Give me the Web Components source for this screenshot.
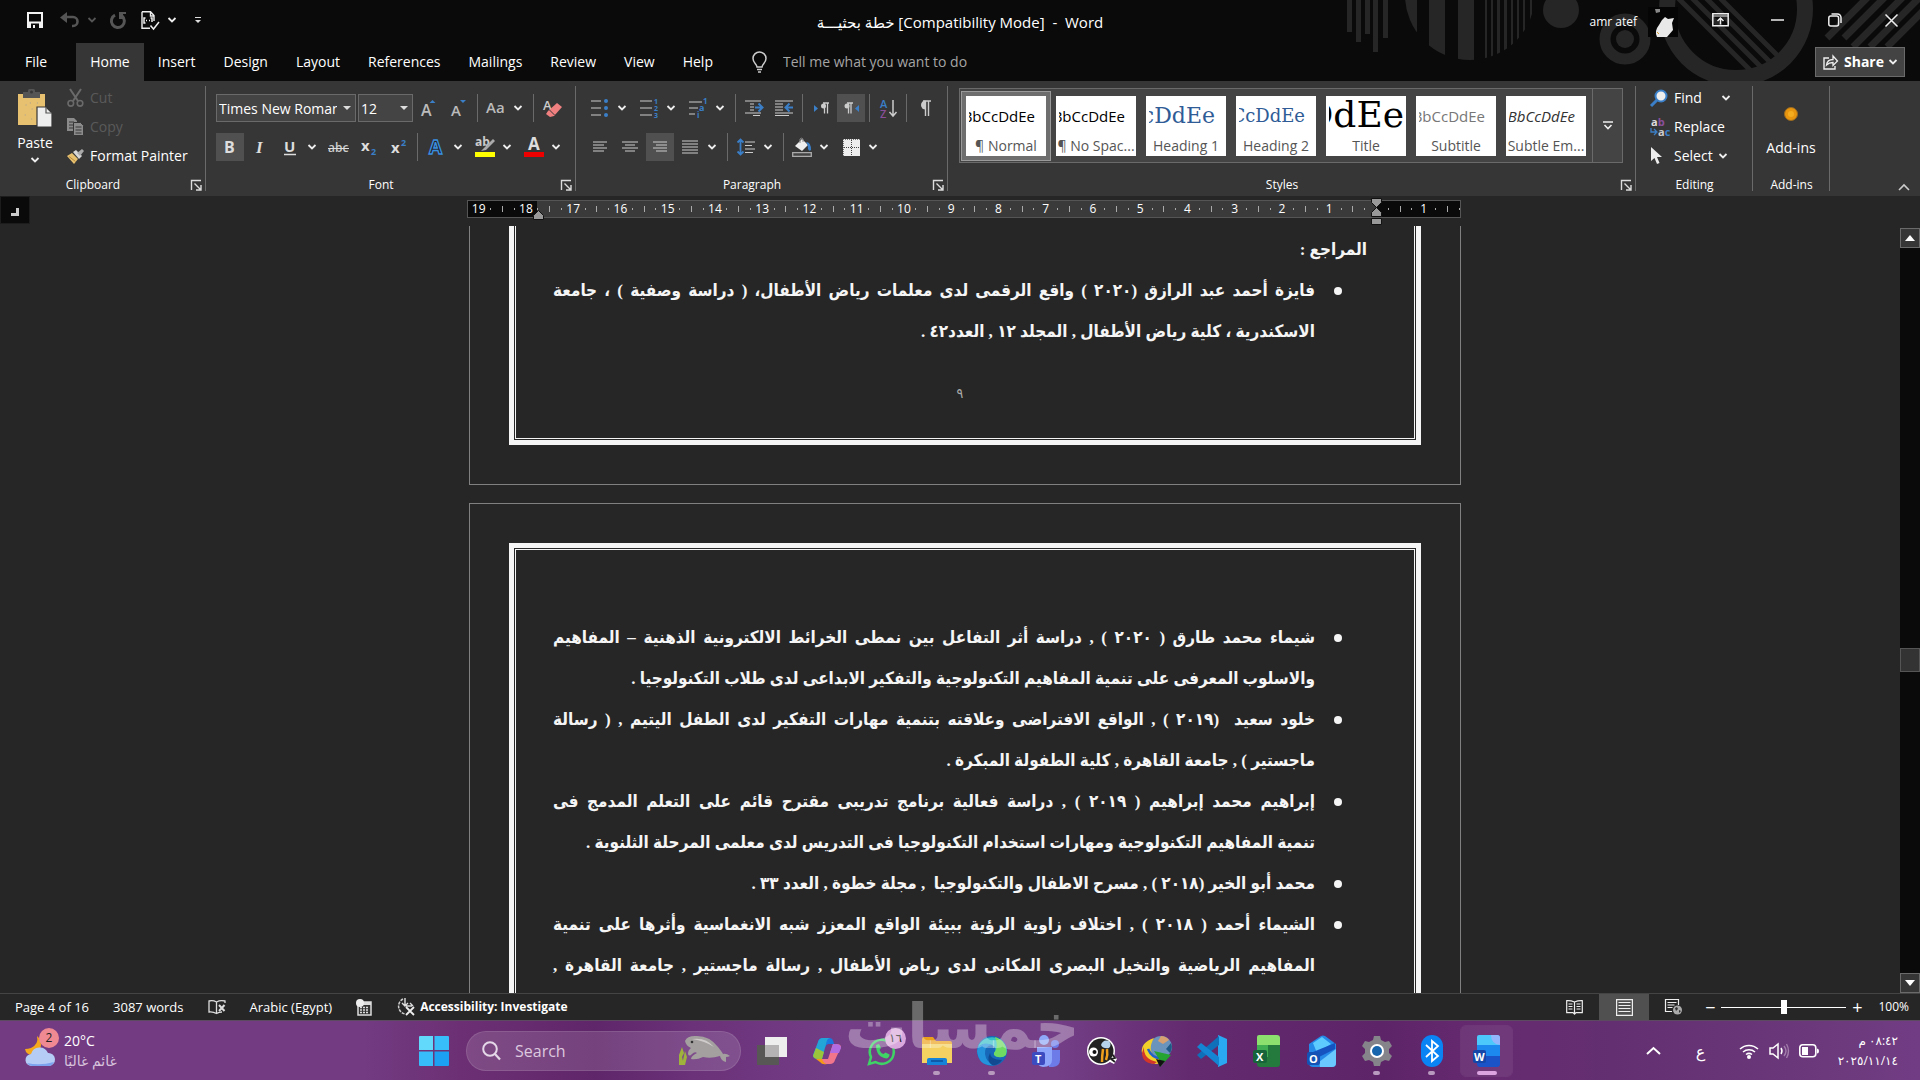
<!doctype html>
<html lang="en">
<head>
<meta charset="UTF-8">
<title>خطة بحثيـــة [Compatibility Mode] - Word</title>
<style>
  :root {
    --black: #0a0a0a;
    --ribbon: #363636;
    --canvas: #262626;
    --line: #6a6a6a;
    --blue: #3a7fc8;
    --ui: "Open Sans", "Noto Sans", "DejaVu Sans", sans-serif;
  }
  html, body { height: 100%; }
  body { margin: 0; background: var(--canvas); color: #fff; font: 14px/20px var(--ui); overflow: hidden; }
</style>
</head>
<body>

<word-app>
  <title-bar slot="top"></title-bar>
  <tab-strip slot="top"></tab-strip>
  <ribbon-bar slot="top"></ribbon-bar>
  <ruler-bar slot="ruler"></ruler-bar>

  <doc-page slot="page" tail>
    <p class="head">المراجع :</p>
    <doc-entry>
      <span class="full">فايزة أحمد عبد الرازق (٢٠٢٠ ) واقع الرقمى لدى معلمات رياض الأطفال، ( دراسة وصفية ) ، جامعة</span>
      <span>الاسكندرية ، كلية رياض الأطفال , المجلد ١٢ , العدد٤٢ .</span>
    </doc-entry>
    <span slot="number">٩</span>
  </doc-page>

  <doc-page slot="page">
    <doc-entry>
      <span class="full">شيماء محمد طارق ( ٢٠٢٠ ) , دراسة أثر التفاعل بين نمطى الخرائط الالكترونية الذهنية – المفاهيم</span>
      <span>والاسلوب المعرفى على تنمية المفاهيم التكنولوجية والتفكير الابداعى لدى طلاب التكنولوجيا .</span>
    </doc-entry>
    <doc-entry>
      <span class="full">خلود سعيد &nbsp;(٢٠١٩ ) , الواقع الافتراضى وعلاقته بتنمية مهارات التفكير لدى الطفل اليتيم , ( رسالة</span>
      <span>ماجستير ) , جامعة القاهرة , كلية الطفولة المبكرة .</span>
    </doc-entry>
    <doc-entry>
      <span class="full">إبراهيم محمد إبراهيم ( ٢٠١٩ ) , دراسة فعالية برنامج تدريبى مقترح قائم على التعلم المدمج فى</span>
      <span>تنمية المفاهيم التكنولوجية ومهارات استخدام التكنولوجيا فى التدريس لدى معلمى المرحلة الثلنوية .</span>
    </doc-entry>
    <doc-entry>
      <span>محمد أبو الخير (٢٠١٨ ) , مسرح الاطفال والتكنولوجيا &nbsp;, مجلة خطوة , العدد ٣٣ .</span>
    </doc-entry>
    <doc-entry>
      <span class="full">الشيماء أحمد ( ٢٠١٨ ) , اختلاف زاوية الرؤية ببيئة الواقع المعزز شبه الانغماسية وأثرها على تنمية</span>
      <span class="full">المفاهيم الرياضية والتخيل البصرى المكانى لدى رياض الأطفال , رسالة ماجستير , جامعة القاهرة ,</span>
    </doc-entry>
  </doc-page>

  <status-bar slot="bottom"></status-bar>
  <task-bar slot="bottom"></task-bar>
</word-app>

<script>
// [width, height, markup]
const ICONS = {
  chev: [8, 6, '<path d="M.5 1L4 4.500 7.500 1" fill="none" stroke="#eee" stroke-width="1.800"/>'],
  chevdim: [8, 6, '<path d="M.5 1L4 4.500 7.500 1" fill="none" stroke="#555" stroke-width="1.800"/>'],
  tri: [8, 4, '<path d="M0 0h8L4 4z" fill="#ddd"/>'],
  more: [10, 10, '<path d="M0 1h10" stroke="#eee" stroke-width="1.500"/><path d="M1.500 4L5 7.500 8.500 4" fill="none" stroke="#eee" stroke-width="1.600"/>'],
  up: [12, 8, '<path d="M1 7l5-5 5 5" fill="none" stroke="#ccc" stroke-width="1.600"/>'],
  launcher: [11, 11, '<path d="M.5 10V.5H10M3.500 3.500l6 6M10 5v5H5" fill="none" stroke="#ddd" stroke-width="1.400"/>'],
  save: [16, 16, '<path d="M0 0h16v16H0z" fill="#f2f2f2"/><path d="M2 2h12v7.500H2zM4 11.500h8V16H4z" fill="#0a0a0a"/><path d="M6 13h2v3H6z" fill="#f2f2f2"/>'],
  undo: [20, 16, '<path d="M3 5h10a4.500 4.500 0 0 1 0 9h-1" fill="none" stroke="#555" stroke-width="2.600"/><path d="M0 5.500L7 0v11z" fill="#555"/>'],
  redo: [18, 17, '<path d="M6 3.200A6.500 6.500 0 1 0 13 4" fill="none" stroke="#555" stroke-width="3"/><path d="M10 0h7v2l-3 0v5h-4z" fill="#555"/>'],
  doccheck: [19, 19, '<path d="M1 .700h8.500L13 4.500V10M9 17.300H1V.700M9.500 1v4H13" fill="none" stroke="#eee" stroke-width="1.400"/><path d="M4.500 7H3v5h1.500M9.500 7H11v4M5 9.500h1m2 0h1M9.500 14.500l3 3.500 5.500-7" fill="none" stroke="#eee" stroke-width="1.500"/>'],
  custom: [6, 6, '<path d="M0 .500h6" stroke="#ddd"/><path d="M0 3h6L3 6z" fill="#ddd"/>'],
  ribbonopt: [17, 14, '<path d="M.800.800h15.400v12H.800z" fill="none" stroke="#eee" stroke-width="1.500"/><path d="M1 3h15" stroke="#eee"/><path d="M8.500 11.500V5.500M5.500 8l3-3 3 3" fill="none" stroke="#eee" stroke-width="1.500"/>'],
  min: [13, 2, '<path d="M0 1h13" stroke="#eee" stroke-width="1.500"/>'],
  restore: [14, 14, '<rect x=".800" y="3" width="9.800" height="10" rx="2" fill="none" stroke="#eee" stroke-width="1.500"/><path d="M3.500 1h6a3.500 3.500 0 0 1 3.500 3.500V10" fill="none" stroke="#eee" stroke-width="1.500"/>'],
  close: [13, 13, '<path d="M.500.500l12 12m0-12l-12 12" stroke="#eee" stroke-width="1.500"/>'],
  share: [16, 16, '<path d="M6 4H1v11h11v-3" fill="none" stroke="#eee" stroke-width="1.400"/><path d="M3.500 11C4 7 7 5.500 10 5.500V2l4.500 5-4.500 4.500V8.500C7 8.500 5 9.500 3.500 11z" fill="none" stroke="#eee" stroke-width="1.300"/>'],
  bulb: [15, 21, '<path d="M5 15c0-3-4-4-4-8.500a6.500 6.500 0 0 1 13 0C14 11 10 12 10 15z" fill="none" stroke="#ccc" stroke-width="1.500"/><path d="M5 17.500h5M6 20h3" stroke="#ccc" stroke-width="1.500"/>'],
  paste: [36, 40, '<path d="M1 5h27v31H1z" fill="#e8c170"/><path d="M6 3h5V1.500Q11 0 12.500 0h4Q18 0 18 1.500V3h5v6H6z" fill="#555"/><circle cx="14.500" cy="3" r="1.500" fill="#363636"/><path d="M9 16h.1m6 4h.1m-7 6h.1m5-12h.1m7 0h.1m-6 16h.1" stroke="#b9a98a" stroke-width="1.300" stroke-linecap="round"/><path d="M20 18h9l6 6v14H20z" fill="#eee" stroke="#363636" stroke-width="1.200"/><path d="M29 18v6h6" fill="none" stroke="#555" stroke-width="1.200"/>'],
  cut: [17, 18, '<path d="M3 0l8 12M14 0L6 12" stroke="#6a6a6a" stroke-width="2"/><circle cx="3.800" cy="14.300" r="2.800" fill="none" stroke="#6a6a6a" stroke-width="1.600"/><circle cx="13" cy="14.300" r="2.800" fill="none" stroke="#6a6a6a" stroke-width="1.600"/>'],
  copy: [17, 18, '<path d="M0 0h7l3 3v10H0z" fill="#8b8b8b"/><path d="M2 4h5M2 7h5M2 10h5" stroke="#363636"/><path d="M6.500 4.500h7l3 3v10h-10z" fill="#8b8b8b" stroke="#363636"/><path d="M8.500 9h6m-6 3h6m-6 3h6" stroke="#363636"/>'],
  painter: [17, 16, '<path d="M0 8l5-3 6 6-4 5z" fill="#e8c170"/><path d="M2 8.500l6.500 5" stroke="#b58a3a"/><path d="M6 4l3-2 6 6-3 3z" fill="#d8d8d8"/><path d="M10 5l5-4 2 2-4 5z" fill="#aaa"/>'],
  grow: [16, 18, '<text x="0" y="17" font-size="16" font-weight="600" fill="#bbb">A</text><path d="M8.500 4h6L11.500 1z" fill="#3a7fc8"/>'],
  shrink: [16, 18, '<text x="0" y="17" font-size="15" font-weight="600" fill="#bbb">A</text><path d="M9 1h6l-3 3z" fill="#3a7fc8"/>'],
  aa: [20, 16, '<text x="0" y="13" font-size="15" font-weight="600" fill="#bbb">Aa</text>'],
  eraser: [19, 20, '<text x="0" y="12" font-size="13" font-weight="600" fill="#ccc">A</text><path d="M5 13L14 5l5 4-8 9-4 1-4-3z" fill="#f08080"/><path d="M6.500 12l5 5" stroke="#363636"/>'],
  bold: [14, 16, '<text x="1" y="14" font-size="16" font-weight="700" fill="#ddd">B</text>'],
  italic: [14, 16, '<text x="3" y="14" font-size="17" font-weight="700" font-style="italic" font-family="Liberation Serif" fill="#ddd">I</text>'],
  under: [14, 18, '<text x="1" y="14" font-size="15" font-weight="700" fill="#ddd">U</text><path d="M1 16.500h12" stroke="#ddd" stroke-width="1.500"/>'],
  strike: [22, 14, '<text x="0" y="12" font-size="12" font-weight="600" fill="#ccc">abc</text><path d="M0 8.500h21" stroke="#ddd"/>'],
  sub: [18, 18, '<text x="1" y="13" font-size="15" font-weight="700" fill="#ddd">x</text><text x="11" y="17" font-size="9" font-weight="700" fill="#3a7fc8">2</text>'],
  sup: [18, 18, '<text x="1" y="15" font-size="15" font-weight="700" fill="#ddd">x</text><text x="11" y="8" font-size="9" font-weight="700" fill="#3a7fc8">2</text>'],
  effects: [18, 18, '<text x="2" y="16" font-size="19" font-weight="700" fill="#222" stroke="#3a8fe0" stroke-width="1.300">A</text>'],
  mark: [20, 20, '<text x="0" y="9" font-size="12" font-weight="700" fill="#ccc">ab</text><path d="M18 2l2 2-9 9-5 1 3-3z" fill="#aaa"/><path d="M0 15h20v5H0z" fill="#ff0"/>'],
  colour: [20, 20, '<text x="4" y="13" font-size="17" font-weight="700" fill="#ddd">A</text><path d="M0 15h20v5H0z" fill="#e00"/>'],
  bullets: [18, 18, '<path d="M0 2h10M0 9h10M0 16h10" stroke="#ccc" stroke-width="1.200"/><g fill="#3a7fc8"><circle cx="15" cy="2" r="2"/><circle cx="15" cy="9" r="2"/><circle cx="15" cy="16" r="2"/></g>'],
  numbers: [18, 20, '<path d="M0 3h12M0 10h12M0 17h12" stroke="#ccc" stroke-width="1.200"/><g fill="#3a7fc8" font-size="7" font-weight="700"><text x="14" y="6">1</text><text x="14" y="13">2</text><text x="14" y="20">3</text></g>'],
  multi: [19, 20, '<path d="M0 4h13M0 10h9M0 16h6" stroke="#ccc" stroke-width="1.200"/><g fill="#3a7fc8" font-weight="700"><text x="14" y="6" font-size="8">1</text><text x="10" y="13" font-size="9">a</text><text x="8" y="20" font-size="8">i</text></g>'],
  indent: [18, 16, '<path d="M0 1h16M5 4h4M5 7h4M5 10h4M0 13h16M8 15.500h7" stroke="#ccc" stroke-width="1.200"/><path d="M10 7.500h7M13.500 3.500l4 4-4 4" fill="none" stroke="#3a7fc8" stroke-width="2"/>'],
  outdent: [18, 16, '<path d="M0 1h18M0 4h8M0 7h8M0 10h8M0 13h18M0 15.500h14" stroke="#ccc" stroke-width="1.200"/><path d="M18 7.500h-7M14.500 3.500l-4 4 4 4" fill="none" stroke="#3a7fc8" stroke-width="2"/>'],
  ltr: [15, 12, '<path d="M0 3l4 3.500L0 10z" fill="#3a7fc8"/><path d="M9 1h6M10.500 1v10.500M13.500 1v10.500" fill="none" stroke="#ccc" stroke-width="1.300"/><circle cx="9.500" cy="4" r="2.500" fill="#ccc"/>'],
  rtl: [15, 12, '<path d="M15 3l-4 3.500 4 3.500z" fill="#3a7fc8"/><path d="M3 1h6M4.500 1v10.500M7 1v10.500" fill="none" stroke="#ccc" stroke-width="1.300"/><circle cx="3" cy="4" r="2.500" fill="#ccc"/>'],
  sort: [17, 19, '<text x="0" y="9" font-size="11" font-weight="600" fill="#3a7fc8">A</text><text x="0" y="19" font-size="11" font-weight="600" fill="#8a4f9a">Z</text><path d="M13 1v15M9.500 13l3.500 4 3.500-4" fill="none" stroke="#ccc" stroke-width="1.500"/>'],
  pilcrow: [12, 16, '<path d="M4 1h8M6.500 1v15M9.500 1v15" stroke="#ccc" stroke-width="1.400"/><path d="M6.500.500v9a4.500 4.500 0 0 1 0-9z" fill="#ccc"/>'],
  left: [14, 12, '<path d="M0 1h14M0 4h11M0 7h14M0 10h11" stroke="#ccc" stroke-width="1.200"/>'],
  center: [16, 12, '<path d="M0 1h16M3 4h10M0 7h16M3 10h10" stroke="#ccc" stroke-width="1.200"/>'],
  right: [14, 12, '<path d="M0 1h14M3 4h11M0 7h14M3 10h11" stroke="#ccc" stroke-width="1.200"/>'],
  justify: [16, 14, '<path d="M0 1h16M0 4h16M0 7h16M0 10h16M0 13h16" stroke="#ccc" stroke-width="1.200"/>'],
  spacing: [18, 18, '<path d="M3.500 1v16M.500 4.500l3-3 3 3M.500 13.500l3 3 3-3" fill="none" stroke="#3a7fc8" stroke-width="1.800"/><path d="M8 4h10M8 7.500h7M8 11h10M8 14.500h8" stroke="#ccc" stroke-width="1.200"/>'],
  shade: [20, 20, '<path d="M3 9l7-7 6 6-6 6z" fill="#eee"/><path d="M8 6V2a2 2 0 0 1 3 0v3" fill="none" stroke="#888"/><path d="M14 5q5 0 5 8-2 2-3-1 0-5-2-7z" fill="#3a7fc8"/><path d="M.700 15.700h18.600v3.600H.700z" fill="#444" stroke="#aaa" stroke-width="1.300"/>'],
  border: [17, 17, '<path d="M0 0h17v17H0z" fill="#eee"/><path d="M8.500 1v15M1 8.500h15" stroke="#444" stroke-dasharray="1 1"/><path d="M0 .500h17M.500 0v17" stroke="#777" stroke-dasharray="1 1"/>'],
  find: [18, 18, '<circle cx="11" cy="7" r="5.500" fill="#eee" stroke="#3a7fc8" stroke-width="2"/><path d="M7 11l-6 6" stroke="#3a7fc8" stroke-width="3"/>'],
  replace: [20, 18, '<text x="1" y="8" font-size="11" font-weight="700" fill="#ddd">a<tspan fill="#8a4f9a">b</tspan></text><text x="8" y="18" font-size="11" font-weight="700" fill="#ccc">a<tspan fill="#3a7fc8">c</tspan></text><path d="M1 10v4h5M4 11l3 3-3 3" fill="none" stroke="#3a7fc8" stroke-width="1.300"/>'],
  select: [12, 18, '<path d="M1 0v14l3.500-3 2.500 6 2.500-1-2.500-6h5z" fill="#eee"/>'],
  addin: [16, 16, '<circle cx="8" cy="8" r="6.500" fill="#e8960f" stroke="#9a6a20"/><circle cx="8" cy="8" r="3" fill="#f5ad20"/>'],
  proof: [18, 15, '<path d="M8.500 2v11M8.500 2Q5 0 1 1v11q4-.500 7.500 1.500Q11 12 14 12M8.500 2Q12 0 17 1v2" fill="none" stroke="#ddd" stroke-width="1.300"/><path d="M11 5l5.500 6m0-6L11 11" stroke="#ddd" stroke-width="2"/>'],
  macro: [16, 17, '<path d="M2 3h13v13H2z" fill="#333" stroke="#ddd" stroke-width="1.500"/><path d="M2 3h13v3H2z" fill="#ddd"/><circle cx="4" cy="4" r="4" fill="#eee"/><path d="M4 8.500h9M4 11h9M4 13.500h9" stroke="#ddd" stroke-width="1.500" stroke-dasharray="2 1"/>'],
  access: [20, 18, '<path d="M7 1a8 8 0 0 0 2 15" fill="none" stroke="#ccc" stroke-width="1.500" stroke-dasharray="3 1"/><path d="M9 0v8M6 5l3 3 3-3M10 8h6M14 5l3 3" fill="none" stroke="#ddd" stroke-width="1.400"/><path d="M10 9l8 8m0-8l-8 8" stroke="#eee" stroke-width="1.800"/>'],
  read: [17, 15, '<path d="M8.500 2Q5 .500.700.700v12H7l1.500 1.500L10 12.700h6.300v-12Q12 .500 8.500 2v12" fill="none" stroke="#eee" stroke-width="1.200"/><path d="M2.500 4h4M2.500 6.500h4M2.500 9h4M10.500 4h4m-4 2.500h4m-4 2.500h4" stroke="#eee"/>'],
  print: [17, 17, '<path d="M.600.600h15.800v15.800H.600z" fill="none" stroke="#eee" stroke-width="1.200"/><path d="M2.500 3.500h12m-12 3h12m-12 3h12m-12 3h12" stroke="#eee"/>'],
  web: [18, 16, '<path d="M7 12.500H.500V.500h13V6" fill="none" stroke="#eee" stroke-width="1.200"/><path d="M2.500 3.500h9m-9 2.500h7m-7 2.500h5" stroke="#eee"/><circle cx="12.500" cy="11" r="4.500" fill="#aaa"/><path d="M10 9l2-1 1 2-2 2zM14 11l2 1-2 2z" fill="#333"/>'],
  weather: [31, 30, '<path d="M12 0q2 8-6 12-3 1-6 1 1 6 8 6 8-3 8-10 0-6-4-9z" fill="#f5a81c"/><path d="M7 30a6 6 0 0 1-1-12 9 9 0 0 1 17-1 6.500 6.500 0 0 1 1 13z" fill="#b5cdf5"/><path d="M2 27q13 3 27-1-2 4-5 4H7q-3 0-5-3z" fill="#7da3ef"/>'],
  start: [30, 30, '<path d="M0 1q0-1 1-1h13v14H0z" fill="#62d8fb"/><path d="M15.500 0H29q1 0 1 1v13H15.500zM0 15.500h14V30H1q-1 0-1-1z" fill="#36bdfa"/><path d="M15.500 15.500H30V29q0 1-1 1H15.500z" fill="#1ba0f4"/>'],
  glass: [19, 20, '<circle cx="8" cy="8" r="6.800" fill="none" stroke="#e5d8e8" stroke-width="2"/><path d="M13 13l5 5.500" stroke="#e5d8e8" stroke-width="2.200"/>'],
  manatee: [52, 32, '<path d="M4 12l2 6-2 4 2 8H1V20zM7 16l2 6-2 8H4z" fill="#9fb33c"/><path d="M7 6Q9 1 17 1q14-1 23 11 4 5 5 7 3-1 7 2-2 1-4 1v5q-5-1-6-6-9 3-17 1-6 3-12 2 0-3 6-6-2-2-5 1-3 3-4 0 0-4 3-6-5-2-6-7z" fill="#a3a09f"/><path d="M14 4q14-2 22 8-9-6-22-8z" fill="#cfcccb"/><circle cx="14" cy="7" r="1.300" fill="#333"/>'],
  taskview: [30, 28, '<path d="M0 8h22v20H0z" fill="#595656"/><path d="M8 0h22v20H8z" fill="#eee"/><path d="M8 8h14v12H8z" fill="#b5b3b3"/>'],
  copilot: [28, 26, '<path d="M5 4q1-4 5-4h7q3 0 4 6h-5q-3 0-4 4z" fill="#1a78e0"/><path d="M5 4L0 17q0 4 5 4h4l4-15q1-6 4-6h-7Q6 0 5 4z" fill="#24a5d8"/><path d="M3 10l-3 8q1 3 5 3h4l2-7z" fill="#9bc53a"/><path d="M8 21q2 5 5 5h4q4 0 5-4l6-13q0-3-5-3h-3l-5 15z" fill="#f2768b"/><path d="M22 6q6 0 6 4l-2 5h-9l3-9z" fill="#b26be0"/><path d="M3 21h6q2 5 5 5-5 1-7-2z" fill="#f59a16"/>'],
  whatsapp: [29, 30, '<path d="M2 28l2-7a12 12 0 1 1 4.500 5z" fill="none" stroke="#3fd366" stroke-width="2.500"/><path d="M9 9l3-1 2 4-1.500 2q1 3 4 4l2-1.500 4 2q0 3-3 4Q9 21 9 9z" fill="#3fd366"/>'],
  folder: [30, 28, '<path d="M0 2q0-2 2-2h9l3 4h14q2 0 2 2v6H0z" fill="#eba01b"/><path d="M0 7h30v19H0z" fill="#f4d160"/><path d="M5 28v-5q0-2 2-2h16q2 0 2 2v5z" fill="#1583d8"/><path d="M9 24h12" stroke="#0c4f9a" stroke-width="1.500"/>'],
  edge: [30, 30, '<circle cx="15" cy="15" r="15" fill="#1768b8"/><path d="M1 11A15 15 0 0 1 30 15q-1 6-7 6-6 0-6-4 4-5-2-8Q7 6 1 11z" fill="#35c1c8"/><path d="M18 1a15 15 0 0 1 11 18q-3 3-8 2-5-1-4-4 5-6 1-16z" fill="#6fdb62"/><path d="M1 11q6-6 14-2-8 1-7 9 1 8 9 11Q2 31 0 15z" fill="#2493dc"/><path d="M13 17q0 7 12 7-4 6-10 5-6-4-2-12z" fill="#114a91"/>'],
  teams: [30, 32, '<circle cx="12" cy="5" r="5" fill="#8ea8f7"/><circle cx="23" cy="9" r="4" fill="#6c7be8"/><path d="M17 15h11v10q0 6-7 7h-4z" fill="#6c7be8"/><path d="M5 12h15v13q0 7-9 7-6-1-6-7z" fill="#8da5fb"/><rect y="17" width="13" height="13" rx="2" fill="#3c4cc0"/><text x="3" y="28" font-size="11" font-weight="700" fill="#fff">T</text>'],
  bee: [30, 30, '<circle cx="14" cy="15" r="14" fill="#fff"/><path d="M24 16l6 7-3 5-6-3z" fill="#fff"/><circle cx="14" cy="15" r="12.500" fill="#222"/><path d="M16 13q-1 7-1 13M20 13q1 6-1 11" fill="none" stroke="#f0a01c" stroke-width="2.500"/><circle cx="6.500" cy="16" r="4.500" fill="#fff"/><circle cx="7.500" cy="16" r="2" fill="#111"/><path d="M14 9q2-6 8-4 3 4 0 7-6 1-8-3z" fill="#b7d3ec"/><path d="M25 18l3 4-4 1 4 3" fill="none" stroke="#222" stroke-width="1.800"/>'],
  idm: [30, 32, '<circle cx="19" cy="12" r="11" fill="#6b94bd"/><path d="M19 1a11 11 0 0 1 8 4l-6 4-5-3z" fill="#d6a070"/><path d="M24 14l5-6q2 5-1 10z" fill="#1f5a86"/><path d="M12 3Q-2 8 0 18q3 11 14 11 8 0 12-8-7 4-13 0Q5 15 12 3z" fill="#f3cf2a"/><path d="M2 12q-1 12 13 15l-3 2Q0 28 0 18z" fill="#d2352a"/><path d="M6 14q4 9 12 9" stroke="#2060c8" stroke-width="2.500" fill="none"/><path d="M12 16l17 4-11 12-1-8z" fill="#25a431"/><path d="M14 24l4 8 5-6z" fill="#111"/>'],
  vscode: [30, 32, '<path d="M21 0l9 4v24l-9 4z" fill="#2aa9f2"/><path d="M22 1v9L4 24l-4-4z" fill="#0f6fb8"/><path d="M22 31v-9L4 8l-4 4z" fill="#1485d2"/>'],
  excel: [28, 32, '<path d="M4 10V2q0-2 2-2h18q3 0 3 3v7z" fill="#8be06e"/><path d="M4 10h23v19q0 3-3 3H7q-3 0-3-3z" fill="#247a3c"/><path d="M4 10h11v12H4z" fill="#3fae52"/><rect y="15" width="14" height="13" rx="2" fill="#17643a"/><text x="3" y="26" font-size="11" font-weight="700" fill="#fff">X</text>'],
  outlook: [30, 32, '<path d="M2 9L14 1q2-1 4 0l11 8v19q0 4-4 4H6q-4 0-4-4z" fill="#2589e8"/><path d="M6 8l9-6 9 7-14 9z" fill="#5ecbff"/><path d="M6 17l22-9v6L10 23z" fill="#1554c0"/><path d="M12 27l17-13v14q0 4-4 4H13z" fill="#6ac9ff"/><rect y="17" width="13" height="13" rx="2" fill="#1453b5"/><text x="2" y="28" font-size="11" font-weight="700" fill="#fff">O</text>'],
  settings: [30, 30, '<path d="M12 0h6l1 4 4 2 4-1 3 5-3 3v4l3 3-3 5-4-1-4 2-1 4h-6l-1-4-4-2-4 1-3-5 3-3v-4l-3-3 3-5 4 1 4-2z" fill="#85848a"/><circle cx="15" cy="15" r="7" fill="#fff"/><circle cx="15" cy="15" r="5" fill="#1765ad"/>'],
  bluetooth: [22, 32, '<rect width="22" height="32" rx="11" fill="#0a83f5"/><path d="M5 10l12 11-6 5V6l6 5L5 22" fill="none" stroke="#fff" stroke-width="1.800"/>'],
  word: [28, 32, '<path d="M4 10V2q0-2 2-2h18q3 0 3 3v7z" fill="#4cc8fb"/><path d="M4 10h23v11H4z" fill="#1b89ee"/><path d="M4 21h23v8q0 3-3 3H7q-3 0-3-3z" fill="#1a52c8"/><path d="M18 0h6q3 0 3 3v7q-9-1-9-10z" fill="#93b5fb"/><rect y="15" width="13" height="13" rx="2" fill="#1447a8"/><text x="1" y="26" font-size="11" font-weight="700" fill="#fff">W</text>'],
  trayup: [15, 9, '<path d="M1 8l6.500-6L14 8" fill="none" stroke="#fff" stroke-width="2"/>'],
  wifi: [20, 16, '<path d="M1 6a13 13 0 0 1 18 0M4 9a9 9 0 0 1 12 0M7 11.500a5 5 0 0 1 6 0" fill="none" stroke="#fff" stroke-width="1.500"/><circle cx="10" cy="14" r="2" fill="#fff"/>'],
  sound: [20, 16, '<path d="M1 5h3l5-4v14l-5-4H1z" fill="none" stroke="#fff" stroke-width="1.500"/><path d="M12 5q2 3 0 6" fill="none" stroke="#fff" stroke-width="1.500"/><path d="M15 3q4 5 0 10M17.500 1q4 7 0 14" fill="none" stroke="#a27cab" stroke-width="1.400"/>'],
  battery: [20, 14, '<rect x=".800" y=".800" width="16" height="12" rx="3" fill="none" stroke="#fff" stroke-width="1.600"/><path d="M3 3h6v8H3z" fill="#fff"/><path d="M18 4.500q2 0 2 2.500t-2 2.500z" fill="#fff"/>'],
  tabstop: [8, 8, '<path d="M8 0v8H0V5h5V0z" fill="#ccc"/>'],
  scrollup: [10, 6, '<path d="M0 6h10L5 0z" fill="#fff"/>'],
  scrolldown: [10, 6, '<path d="M0 0h10L5 6z" fill="#fff"/>'],
  indentleft: [11, 10, '<path d="M.500 9.500v-4l5-5 5 5v4z" fill="#999" stroke="#111"/>'],
  indentright: [11, 28, '<path d="M.500.500h10v4l-5 5-5-5zM.500 18.500v-4l5-5 5 5v4zM.500 20.500h10v6H.500z" fill="#999" stroke="#111"/>']
};

// Registers an element whose shadow root is a fixed piece of markup
function define(name, html) {
  const tpl = document.createElement('template');
  tpl.innerHTML = html;
  customElements.define(name, class extends HTMLElement {
    constructor() {
      super();
      this.attachShadow({mode: 'open'}).appendChild(tpl.content.cloneNode(true));
    }
  });
}

const BUTTON = `button { appearance: none; border: 0; margin: 0; padding: 0; background: none; color: inherit; font: inherit;
  display: flex; align-items: center; justify-content: center; white-space: nowrap; }`;

customElements.define('w-icon', class extends HTMLElement {
  connectedCallback() {
    if (this.shadowRoot) return;
    const [w, h, body] = ICONS[this.getAttribute('name')];
    this.attachShadow({mode: 'open'}).innerHTML = `
      <style>:host { display: block; flex: none; } svg { display: block; overflow: visible; font-family: var(--ui); }</style>
      <svg width="${w}" height="${h}" viewBox="0 0 ${w} ${h}" aria-hidden="true">${body}</svg>`;
  }
});

customElements.define('tool-button', class extends HTMLElement {
  connectedCallback() {
    if (this.shadowRoot) return;
    const label = this.getAttribute('label');
    const more = this.hasAttribute('split') ? `<button class="more" aria-label="${label} options"><w-icon name="chev"></w-icon></button>` : '';
    this.attachShadow({mode: 'open'}).innerHTML = `
      <style>${BUTTON}
        :host { display: flex; flex: none; }
        :host([split]) { margin-right: 3px; }
        :host([on]) .main { background: #505050; }
        .main { width: 28px; height: 28px; }
        .more { width: 16px; height: 28px; }
      </style>
      <button class="main" aria-label="${label}"><w-icon name="${this.getAttribute('icon')}"></w-icon></button>${more}`;
  }
});

define('tool-sep', `<style>:host { flex: none; width: 1px; height: 28px; margin: 0 2px; background: var(--line); }</style>`);

define('word-app', `
<style>
  :host { display: flex; flex-direction: column; height: 100vh; background: linear-gradient(var(--black) 0 81px, var(--canvas) 81px); }
  .work { flex: 1; min-height: 0; display: flex; border-bottom: 1px solid #444; }
  .corner { width: 30px; flex: none; }
  .corner button { display: flex; align-items: center; justify-content: center; width: 30px; height: 28px; padding: 4px 0 0;
    background: var(--black); border: 1px solid #1c1c1c; }
  .centre { flex: 1; min-width: 0; display: flex; flex-direction: column; align-items: center; }
  .ruler { flex: none; height: 30px; width: 994px; }
  .pages { flex: 1; min-height: 0; overflow: hidden; display: flex; flex-direction: column; gap: 18px; }
  .scroll { width: 20px; flex: none; margin: 32px 0 0 2px; display: flex; flex-direction: column; background: var(--black); }
  .scroll button { display: flex; align-items: center; justify-content: center; height: 20px; padding: 0; background: var(--ribbon); border: 1px solid var(--line); }
  .track { flex: 1; display: flex; flex-direction: column; }
  .track::before { content: ""; flex: 57; }
  .track::after { content: ""; flex: 43; }
  .thumb { height: 24px; background: #333; border: 1px solid #555; box-sizing: border-box; }
</style>
<slot name="top"></slot>
<div class="work">
  <div class="corner"><button aria-label="Tab stop"><w-icon name="tabstop"></w-icon></button></div>
  <div class="centre">
    <div class="ruler"><slot name="ruler"></slot></div>
    <div class="pages"><slot name="page"></slot></div>
  </div>
  <div class="scroll">
    <button aria-label="Scroll up"><w-icon name="scrollup"></w-icon></button>
    <div class="track"><div class="thumb"></div></div>
    <button aria-label="Scroll down"><w-icon name="scrolldown"></w-icon></button>
  </div>
</div>
<slot name="bottom"></slot>`);

define('title-bar', `
<style>${BUTTON}
  :host { display: grid; grid-template-columns: 1fr auto 1fr; align-items: center; height: 43px; flex: none; position: relative; }
  .art { position: absolute; right: 0; top: 0; width: 580px; height: 81px; }
  .side { display: flex; align-items: center; height: 35px; }
  .quick { padding: 0 0 3px 19px; }
  .quick button { width: 32px; height: 32px; }
  .quick button:first-child { margin-right: 3px; }
  .quick button.s { width: 12px; margin-right: 4px; }
  .win { justify-content: flex-end; position: relative; font-size: 12px; }
  .win button { width: 57px; height: 35px; padding-bottom: 3px; }
  .face { margin: 0 14px 0 11px; width: 30px; height: 30px; }
  h1 { margin: 0; font-size: 15px; font-weight: 400; white-space: pre; position: relative; }
</style>
<svg class="art" viewBox="1340 0 580 81" aria-hidden="true">
  <defs><clipPath id="c"><circle cx="1470" cy="-5" r="65"/></clipPath><clipPath id="r"><circle cx="1736" cy="9" r="62"/></clipPath></defs>
  <g fill="#262626">
    <path d="M1347 0h5v32h-5zM1356 0h5v42h-5zM1365 0h5v34h-5zM1373 0h5v52h-5zM1383 0h5v38h-5z"/>
    <path clip-path="url(#c)" d="M1400 0h17v60h-17zM1429 0h16v60h-16zM1458 0h16v61h-16zM1485 0h2v60h-2zM1491 0h2v60h-2zM1497 0h3v60h-3zM1504 0h3v60h-3zM1511 0h2v60h-2zM1517 0h2v60h-2zM1523 0h2v60h-2zM1530 0h2v60h-2z"/>
    <circle cx="1561" cy="10" r="18"/><circle cx="1625" cy="39" r="9"/>
  </g>
  <g fill="none" stroke="#262626">
    <circle cx="1625" cy="39" r="20" stroke-width="11"/><circle cx="1736" cy="9" r="69" stroke-width="16"/>
    <path clip-path="url(#r)" stroke-width="5" d="M1660-20l110 110M1674-20l110 110M1688-20l110 110M1702-20l110 110"/>
    <path stroke-width="7" d="M1827 38l50-50M1844 38l50-50M1853 47l60-60M1870 47l60-60M1887 47l60-60"/>
  </g>
</svg>
<div class="side quick">
  <button aria-label="Save"><w-icon name="save"></w-icon></button>
  <button aria-label="Undo"><w-icon name="undo"></w-icon></button>
  <button class="s" aria-label="Undo list"><w-icon name="chevdim"></w-icon></button>
  <button aria-label="Redo"><w-icon name="redo"></w-icon></button>
  <button aria-label="Check document"><w-icon name="doccheck"></w-icon></button>
  <button class="s" aria-label="Check list"><w-icon name="chev"></w-icon></button>
  <button aria-label="Customize toolbar"><w-icon name="custom"></w-icon></button>
</div>
<h1><bdi>خطة بحثيـــة</bdi> [Compatibility Mode]  -  Word</h1>
<div class="side win">
  <span>amr atef</span>
  <svg class="face" viewBox="0 0 30 30" aria-hidden="true"><path fill="#050505" d="M0 0h30v30H0z"/><path d="M7 2l5 0 0 3-4 1z" fill="#888"/><path d="M14 13l3-3 3 2 6-1-2 5 1 7-6 7H9q-3-6 2-12z" fill="#e8e8e8"/><path d="M9 25l2 2" stroke="#d8a030"/></svg>
  <button aria-label="Ribbon display options"><w-icon name="ribbonopt"></w-icon></button>
  <button aria-label="Minimize"><w-icon name="min"></w-icon></button>
  <button aria-label="Restore"><w-icon name="restore"></w-icon></button>
  <button aria-label="Close"><w-icon name="close"></w-icon></button>
</div>`);

define('tab-strip', `
<style>${BUTTON}
  :host { display: flex; height: 38px; flex: none; align-items: stretch; position: relative; padding-left: 11px; }
  nav { display: flex; }
  nav button { padding: 0 14px; }
  nav button:first-child { margin-right: 15px; }
  .on { background: var(--ribbon); }
  label { flex: 1; display: flex; align-items: center; gap: 16px; padding-left: 25px; }
  input { flex: 1; border: 0; background: none; color: #fff; font: inherit; padding: 0; outline: 0; }
  input::placeholder { color: #a5a5a5; opacity: 1; }
  .share { align-self: flex-start; margin: 4px 15px 0 0; height: 30px; width: 90px; gap: 5px; background: #434343; border: 1px solid #6a6a6a; font-weight: 700; }
</style>
<nav>
  <button>File</button><button class="on">Home</button><button>Insert</button><button>Design</button><button>Layout</button>
  <button>References</button><button>Mailings</button><button>Review</button><button>View</button><button>Help</button>
</nav>
<label><w-icon name="bulb"></w-icon><input placeholder="Tell me what you want to do" aria-label="Tell me what you want to do"></label>
<button class="share"><w-icon name="share"></w-icon>Share<w-icon name="chev"></w-icon></button>`);

define('ribbon-group', `
<style>${BUTTON}
  :host { display: grid; grid-template-rows: minmax(0, 1fr) 20px; flex: none; box-sizing: border-box; padding: 8px 0 1px; position: relative; }
  :host::after { content: ""; position: absolute; right: 0; top: 5px; bottom: 5px; width: 1px; background: var(--line); }
  .foot { display: grid; grid-template: 20px / 1fr 20px; align-items: center; text-align: center; font-size: 12px; white-space: nowrap; }
  .foot button { height: 20px; }
  :host([plain]) .foot { grid-template-columns: 1fr; }
  :host([plain]) .foot button { display: none; }
</style>
<slot></slot>
<div class="foot"><slot name="label"></slot><button aria-label="More options"><w-icon name="launcher"></w-icon></button></div>`);

define('pick-list', `
<style>
  :host { display: grid; height: 28px; box-sizing: border-box; border: 1px solid #6a6a6a; background: #444; align-items: center; }
  ::slotted(select) { grid-area: 1 / 1; appearance: none; border: 0; background: none; color: #fff; font: 14px var(--ui); padding: 0 18px 0 2px; width: 100%; min-width: 0; outline: 0; }
  w-icon { grid-area: 1 / 1; justify-self: end; margin-right: 4px; pointer-events: none; }
</style>
<slot></slot><w-icon name="tri"></w-icon>`);

define('style-tile', `
<style>
  :host { flex: none; display: flex; flex-direction: column; box-sizing: border-box; width: 90px; height: 70px; padding: 5px; text-align: center; }
  :host([on]) { background: #6e6e6e; outline: 1px solid #9a9a9a; outline-offset: -1px; }
  button { border: 0; padding: 0; background: #fff; flex: 1; min-height: 0; display: flex; flex-direction: column; font: 14px/20px var(--ui); color: #555; overflow: hidden; }
  .demo { display: flex; justify-content: flex-end; align-items: center; height: 40px; margin: 0 11px 0 3px; width: 66px; overflow: hidden; flex: none; color: var(--c, #000); font: var(--f, 15px/40px "Open Sans"); }
  :host([wide]) .demo { width: 75px; height: 38px; margin: 0 2px 2px 3px; }
  .name { width: 80px; white-space: nowrap; }
</style>
<button><span class="demo">AaBbCcDdEe</span><span class="name"><slot></slot></span></button>`);

define('ribbon-bar', `
<style>${BUTTON}
  :host { display: flex; height: 115px; flex: none; background: var(--ribbon); }
  .row { display: flex; gap: 2px; height: 28px; }
  .rows { display: flex; flex-direction: column; gap: 11px; padding: 5px 0 0 10px; }
  .clip { width: 206px; }
  .font { width: 370px; }
  .para { width: 372px; }
  .styles { width: 688px; }
  .edit { width: 117px; }
  .adds { width: 77px; }
  .cols { display: flex; }
  .paste { flex-direction: column; width: 67px; padding-left: 3px; justify-content: flex-start; gap: 4px; }
  .list { display: flex; flex-direction: column; margin-top: -6px; }
  .list button { justify-content: flex-start; height: 29px; gap: 6px; }
  .dim { color: #5a5a5a; }
  .edit .list { margin-left: 14px; }
  .edit .list w-icon:first-child { width: 18px; }
  .far { margin-left: 14px; }
  .gallery { display: flex; margin: -1px 13px 0 11px; height: 75px; box-sizing: border-box; border: 1px solid #6a6a6a; background: #444; }
  .tiles { flex: 1; display: flex; padding: 1px; align-items: center; overflow: hidden; }
  .gallery > button { width: 30px; border-left: 1px solid #6a6a6a; }
  .add { flex-direction: column; gap: 16px; width: 76px; }
  .fold { flex: 1; display: flex; justify-content: flex-end; align-items: flex-end; padding: 0 10px 5px 0; }
</style>
<ribbon-group class="clip">
  <div class="cols">
    <button class="paste"><w-icon name="paste"></w-icon>Paste<w-icon name="chev"></w-icon></button>
    <div class="list">
      <button class="dim"><w-icon name="cut"></w-icon>Cut</button>
      <button class="dim"><w-icon name="copy"></w-icon>Copy</button>
      <button><w-icon name="painter"></w-icon>Format Painter</button>
    </div>
  </div>
  <span slot="label">Clipboard</span>
</ribbon-group>
<ribbon-group class="font">
  <div class="rows">
    <div class="row">
      <pick-list style="width:140px"><select aria-label="Font"><option>Times New Roman</option></select></pick-list>
      <pick-list style="width:55px"><select aria-label="Font size"><option>12</option></select></pick-list>
      <tool-button icon="grow" label="Increase font size"></tool-button>
      <tool-button icon="shrink" label="Decrease font size"></tool-button>
      <tool-sep></tool-sep>
      <tool-button icon="aa" label="Change case" split></tool-button>
      <tool-sep></tool-sep>
      <tool-button icon="eraser" label="Clear formatting"></tool-button>
    </div>
    <div class="row">
      <tool-button icon="bold" label="Bold" on></tool-button>
      <tool-button icon="italic" label="Italic"></tool-button>
      <tool-button icon="under" label="Underline" split></tool-button>
      <tool-button icon="strike" label="Strikethrough"></tool-button>
      <tool-button icon="sub" label="Subscript"></tool-button>
      <tool-button icon="sup" label="Superscript"></tool-button>
      <tool-sep></tool-sep>
      <tool-button icon="effects" label="Text effects" split></tool-button>
      <tool-button icon="mark" label="Highlight" split></tool-button>
      <tool-button icon="colour" label="Font colour" split></tool-button>
    </div>
  </div>
  <span slot="label">Font</span>
</ribbon-group>
<ribbon-group class="para">
  <div class="rows">
    <div class="row">
      <tool-button icon="bullets" label="Bullets" split></tool-button>
      <tool-button icon="numbers" label="Numbering" split></tool-button>
      <tool-button icon="multi" label="Multilevel list" split></tool-button>
      <tool-sep></tool-sep>
      <tool-button icon="indent" label="Decrease indent"></tool-button>
      <tool-button icon="outdent" label="Increase indent"></tool-button>
      <tool-sep></tool-sep>
      <tool-button icon="ltr" label="Left to right"></tool-button>
      <tool-button icon="rtl" label="Right to left" on></tool-button>
      <tool-sep></tool-sep>
      <tool-button icon="sort" label="Sort"></tool-button>
      <tool-sep></tool-sep>
      <tool-button icon="pilcrow" label="Show marks"></tool-button>
    </div>
    <div class="row">
      <tool-button icon="left" label="Align left"></tool-button>
      <tool-button icon="center" label="Center"></tool-button>
      <tool-button icon="right" label="Align right" on></tool-button>
      <tool-button icon="justify" label="Justify" split></tool-button>
      <tool-sep></tool-sep>
      <tool-button icon="spacing" label="Line spacing" split></tool-button>
      <tool-sep></tool-sep>
      <tool-button icon="shade" label="Shading" split></tool-button>
      <tool-button icon="border" label="Borders" split></tool-button>
    </div>
  </div>
  <span slot="label">Paragraph</span>
</ribbon-group>
<ribbon-group class="styles">
  <div class="gallery">
    <div class="tiles">
      <style-tile on>¶ Normal</style-tile>
      <style-tile>¶ No Spac...</style-tile>
      <style-tile style="--c:#2f5c96;--f:22px/40px 'DejaVu Serif'">Heading 1</style-tile>
      <style-tile style="--c:#2f5c96;--f:18px/40px 'DejaVu Serif'">Heading 2</style-tile>
      <style-tile wide style="--f:36px/38px 'DejaVu Serif'">Title</style-tile>
      <style-tile style="--c:#777">Subtitle</style-tile>
      <style-tile style="--c:#333;--f:italic 15px/40px 'Open Sans'">Subtle Em...</style-tile>
    </div>
    <button aria-label="More styles"><w-icon name="more"></w-icon></button>
  </div>
  <span slot="label">Styles</span>
</ribbon-group>
<ribbon-group class="edit" plain>
  <div class="list">
    <button><w-icon name="find"></w-icon>Find<w-icon name="chev" class="far"></w-icon></button>
    <button><w-icon name="replace"></w-icon>Replace</button>
    <button><w-icon name="select"></w-icon>Select<w-icon name="chev"></w-icon></button>
  </div>
  <span slot="label">Editing</span>
</ribbon-group>
<ribbon-group class="adds" plain>
  <button class="add"><w-icon name="addin"></w-icon>Add-ins</button>
  <span slot="label">Add-ins</span>
</ribbon-group>
<div class="fold"><button aria-label="Collapse ribbon"><w-icon name="up"></w-icon></button></div>`);

// Horizontal ruler: four marks per centimetre, zero at the right indent
customElements.define('ruler-bar', class extends HTMLElement {
  constructor() {
    super();
    let marks = '';
    for (let i = 0; i < 85; i++) {
      const k = (i + 3) % 4;
      const n = Math.abs(19 - (i - 1) / 4);
      if (k === 0) marks += n ? `<b>${n}</b>` : '<b></b>';
      else marks += k === 2 ? '<i class="bar"></i>' : '<i></i>';
    }
    this.attachShadow({mode: 'open'}).innerHTML = `
      <style>
        :host { display: block; padding-top: 4px; position: relative; }
        .strip { display: flex; height: 18px; box-sizing: border-box; border: 1px solid #555; overflow: hidden;
          background: linear-gradient(90deg, var(--black) 7%, #3a3a3a 7% 91.6%, var(--black) 91.6%); }
        .in { flex: 1; display: flex; margin: 0 -5px 0 -7px; align-items: center; }
        b, i { flex: 1 1 0; width: 0; display: flex; justify-content: center; font: 12px/16px "Open Sans"; }
        i::before { content: ""; width: 1px; height: 2px; background: #aaa; }
        .bar::before { height: 6px; }
        w-icon { position: absolute; }
        .l { left: 66px; top: 14px; }
        .r { right: 79px; top: 2px; }
      </style>
      <div class="strip"><div class="in">${marks}</div></div>
      <w-icon class="l" name="indentleft"></w-icon><w-icon class="r" name="indentright"></w-icon>`;
  }
});

define('doc-page', `
<style>
  :host { display: block; flex: none; box-sizing: border-box; width: 992px; margin-left: 2px; padding: 39px; border: 1px solid #808080; min-height: 1403px; }
  :host([tail]) { border-top: 0; padding-top: 0; min-height: 0; }
  .frame { border: 5px solid #f5f5f5; padding: 1px; }
  .inner { border: 1px solid #f5f5f5; padding: 67px 47px 24px 37px; min-height: 1200px;
    direction: rtl; font: 700 17px/41px "Liberation Serif", "DejaVu Sans Condensed", "DejaVu Sans", serif; color: #f5f5f5; }
  :host([tail]) .frame { border-top: 0; padding-top: 0; }
  :host([tail]) .inner { border-top: 0; padding-top: 3px; min-height: 0; }
  ::slotted(p) { margin: 0; }
  footer { display: none; }
  :host([tail]) footer { display: block; margin-top: 21px; text-align: center; font-weight: 400; font-size: 14px; color: #aaa; }
</style>
<div class="frame"><div class="inner"><slot></slot><footer><slot name="number"></slot></footer></div></div>`);

define('doc-entry', `
<style>
  :host { display: flex; }
  .dot { width: 52px; box-sizing: border-box; padding-right: 6px; flex: none; display: flex; align-items: center; justify-content: center; height: 41px; }
  .dot::before { content: ""; width: 8px; height: 8px; border-radius: 50%; background: #f5f5f5; }
  .text { flex: 1; min-width: 0; }
  ::slotted(span) { display: block; white-space: nowrap; }
  ::slotted(.full) { text-align-last: justify; }
</style>
<div class="dot"></div><div class="text"><slot></slot></div>`);

define('status-bar', `
<style>${BUTTON}
  :host { display: flex; align-items: stretch; height: 26px; flex: none; font-size: 13px; background: var(--canvas); border-bottom: 1px solid #5c4a60; padding: 0 11px 0 15px; }
  .left { flex: 1; display: flex; align-items: center; gap: 24px; }
  .acc { gap: 4px; font-size: 12px; font-weight: 700; }
  .view { width: 50px; }
  .on { background: #505050; }
  .zoom { display: flex; align-items: center; gap: 6px; padding-left: 6px; }
  input { appearance: none; width: 125px; height: 14px; margin: 0; background: linear-gradient(#fff, #fff) center / 100% 1px no-repeat; }
  input::-webkit-slider-thumb { appearance: none; width: 6px; height: 14px; background: #fff; }
  .pm { width: 10px; font-size: 18px; }
  .pct { padding-left: 10px; font-size: 12px; }
</style>
<div class="left">
  <button>Page 4 of 16</button><button>3087 words</button><button aria-label="Proofing"><w-icon name="proof"></w-icon></button>
  <button>Arabic (Egypt)</button><button aria-label="Macros"><w-icon name="macro"></w-icon></button>
  <button class="acc"><w-icon name="access"></w-icon>Accessibility: Investigate</button>
</div>
<button class="view" aria-label="Read mode"><w-icon name="read"></w-icon></button>
<button class="view on" aria-label="Print layout"><w-icon name="print"></w-icon></button>
<button class="view" aria-label="Web layout"><w-icon name="web"></w-icon></button>
<div class="zoom">
  <button class="pm" aria-label="Zoom out">−</button>
  <input type="range" min="0" max="100" value="50" aria-label="Zoom">
  <button class="pm" aria-label="Zoom in">+</button>
  <button class="pct">100%</button>
</div>`);

define('task-app', `
<style>${BUTTON}
  :host { display: block; flex: none; width: 55px; }
  button { position: relative; width: 51px; height: 50px; margin: 0 2px; border-radius: 5px; box-sizing: border-box; }
  :host([active]) button { background: #ffffff12; outline: 1px solid #ffffff10; }
  :host([run]) button::after, :host([active]) button::after { content: ""; position: absolute; bottom: 1px; left: 22px; width: 7px; height: 4px; border-radius: 2px; background: #b99abf; }
  :host([active]) button::after { left: 16px; width: 20px; background: #dca5e2; }
  ::slotted(span) { position: absolute; right: 1px; top: 2px; width: 21px; height: 21px; border-radius: 50%; background: #d9a8dd; color: #222; font-size: 12px; line-height: 20px; }
</style>
<button><slot></slot></button>`);

define('task-bar', `
<style>${BUTTON}
  :host { display: flex; position: relative; height: 59px; flex: none; align-items: center;
    background: linear-gradient(90deg, #723b82 0, #723b82 19%, #6c2f73 24%, #60266a 31%, #6b3179 36%, #733e86 44%, #743f87 55%, #632a6f 62%, #5e2468 72%, #662b70 78%, #632f70 84%, #6c3a7d 96%, #723c84 100%); }
  .weather { display: flex; align-items: center; gap: 8px; padding-left: 25px; width: 408px; box-sizing: border-box; position: relative; justify-content: flex-start; text-align: left; }
  .weather em { position: absolute; left: 39px; top: -3px; width: 20px; height: 20px; border-radius: 50%; background: #f08a92; color: #222; font: 12px/20px var(--ui); text-align: center; }
  .weather small { display: block; font-size: 14px; line-height: 20px; color: #d8c3dc; }
  .start { width: 51px; height: 50px; }
  label { display: flex; align-items: center; gap: 14px; width: 275px; height: 40px; box-sizing: border-box; padding: 0 10px 0 15px; margin: 0 3px 0 7px;
    border-radius: 20px; background: #ffffff22; border: 1px solid #ffffff1c; }
  input { flex: 1; min-width: 0; border: 0; background: none; font: 16px var(--ui); color: #fff; padding: 0; outline: 0; }
  input::placeholder { color: #dcc8df; opacity: 1; }
  .apps { display: flex; flex: 1; }
  .tray { display: flex; align-items: center; padding-right: 22px; }
  .tray button { gap: 10px; }
  .lang { width: 40px; margin: 0 18px 0 20px; font-size: 16px; }
  .tray .clock { flex-direction: column; gap: 0; align-items: flex-end; padding-left: 19px; font-size: 12px; }
  .mark { position: absolute; left: 44%; top: -30px; color: #ffffff50; font: 700 62px/72px "DejaVu Sans"; pointer-events: none; }
</style>
<button class="weather"><w-icon name="weather"></w-icon><em>2</em><span>20°C<small dir="rtl">غائم غالبًا</small></span></button>
<button class="start" aria-label="Start"><w-icon name="start"></w-icon></button>
<label><w-icon name="glass"></w-icon><input placeholder="Search" aria-label="Search"><w-icon name="manatee"></w-icon></label>
<div class="apps">
  <task-app><w-icon name="taskview"></w-icon></task-app>
  <task-app><w-icon name="copilot"></w-icon></task-app>
  <task-app><w-icon name="whatsapp"></w-icon><span>١٦</span></task-app>
  <task-app run><w-icon name="folder"></w-icon></task-app>
  <task-app run><w-icon name="edge"></w-icon></task-app>
  <task-app><w-icon name="teams"></w-icon></task-app>
  <task-app><w-icon name="bee"></w-icon></task-app>
  <task-app><w-icon name="idm"></w-icon></task-app>
  <task-app><w-icon name="vscode"></w-icon></task-app>
  <task-app><w-icon name="excel"></w-icon></task-app>
  <task-app><w-icon name="outlook"></w-icon></task-app>
  <task-app run><w-icon name="settings"></w-icon></task-app>
  <task-app run><w-icon name="bluetooth"></w-icon></task-app>
  <task-app active><w-icon name="word"></w-icon></task-app>
</div>
<div class="tray">
  <button aria-label="Hidden icons"><w-icon name="trayup"></w-icon></button>
  <button class="lang">ع</button>
  <button aria-label="Network, volume, battery"><w-icon name="wifi"></w-icon><w-icon name="sound"></w-icon><w-icon name="battery"></w-icon></button>
  <button class="clock"><span dir="rtl">٠٨:٤٢ م</span><span dir="rtl">٢٠٢٥/١١/١٤</span></button>
</div>
<div class="mark">خمسات</div>`);
</script>

</body>
</html>
